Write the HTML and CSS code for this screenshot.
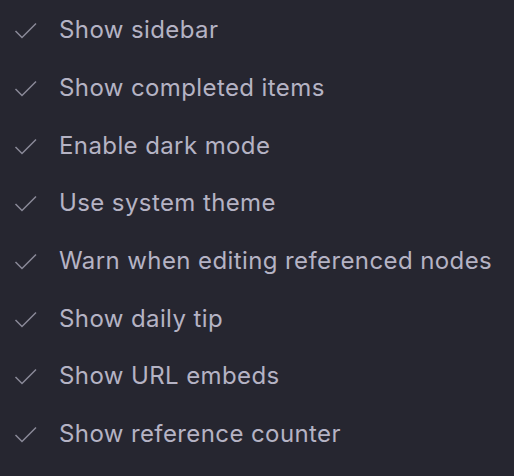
FILE: index.html
```html
<!DOCTYPE html>
<html lang="en">
<head>
  <meta charset="UTF-8">
  <title>Settings</title>
  <link rel="stylesheet" href="styles.css">
</head>
<body>
  <ul class="options">
    <li class="option"><svg class="check" viewBox="0 0 23 17"><path d="M1.5 9 L8 15.5 L22 1.5"/></svg><span>Show sidebar</span></li>
    <li class="option"><svg class="check" viewBox="0 0 23 17"><path d="M1.5 9 L8 15.5 L22 1.5"/></svg><span>Show completed items</span></li>
    <li class="option"><svg class="check" viewBox="0 0 23 17"><path d="M1.5 9 L8 15.5 L22 1.5"/></svg><span>Enable dark mode</span></li>
    <li class="option"><svg class="check" viewBox="0 0 23 17"><path d="M1.5 9 L8 15.5 L22 1.5"/></svg><span>Use system theme</span></li>
    <li class="option"><svg class="check" viewBox="0 0 23 17"><path d="M1.5 9 L8 15.5 L22 1.5"/></svg><span>Warn when editing referenced nodes</span></li>
    <li class="option"><svg class="check" viewBox="0 0 23 17"><path d="M1.5 9 L8 15.5 L22 1.5"/></svg><span>Show daily tip</span></li>
    <li class="option"><svg class="check" viewBox="0 0 23 17"><path d="M1.5 9 L8 15.5 L22 1.5"/></svg><span>Show URL embeds</span></li>
    <li class="option"><svg class="check" viewBox="0 0 23 17"><path d="M1.5 9 L8 15.5 L22 1.5"/></svg><span>Show reference counter</span></li>
  </ul>
</body>
</html>
```
FILE: styles.css
```css
html, body {
  margin: 0;
  background-color: #262630;
}
body {
  font-family: Inter, 'Liberation Sans', sans-serif;
  color: #b5b3c4;
  font-size: 24px;
  letter-spacing: 0.4px;
}

.options {
  list-style: none;
  margin: 0;
  padding: 1px 0 0 0;
}

.option {
  display: flex;
  align-items: center;
  height: 57.7px;
  padding-left: 14px;
}

.check {
  width: 23px;
  height: 17px;
  margin-right: 22px;
  margin-top: 2px;
  fill: none;
  stroke: #8a8998;
  stroke-width: 1.5;
}
```
